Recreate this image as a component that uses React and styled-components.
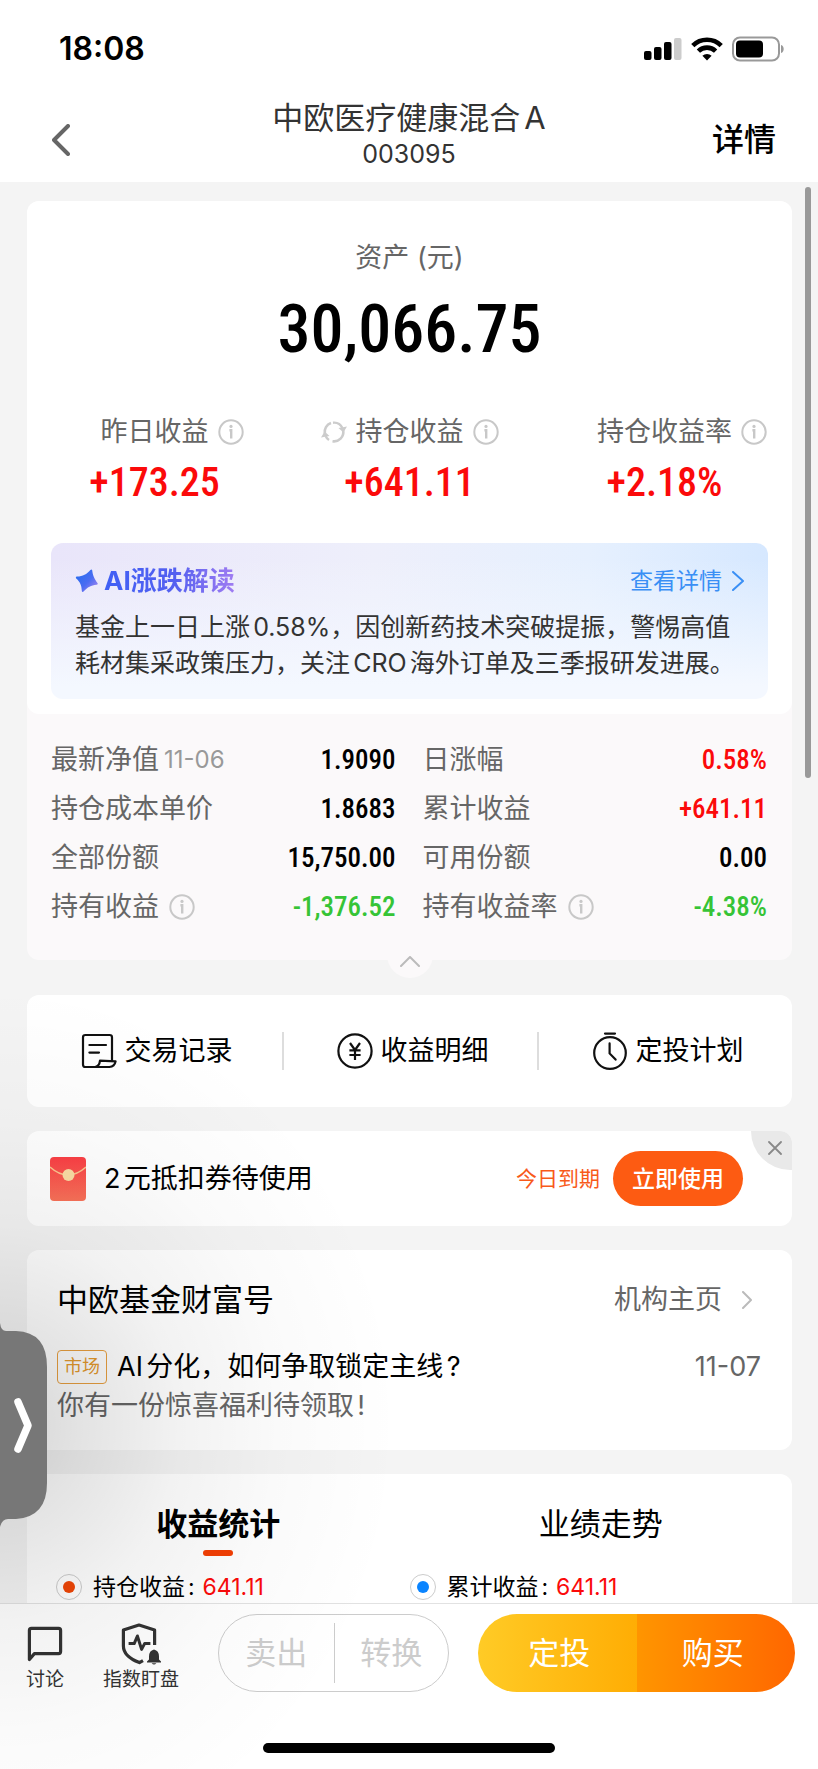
import React from 'react';
import styled, { createGlobalStyle, css } from 'styled-components';

const GlobalStyle = createGlobalStyle`
  *, *::before, *::after { box-sizing: border-box; }
  body { margin: 0; background: #f4f4f4; }
  button {
    margin: 0; padding: 0; border: 0; background: none;
    font: inherit; color: inherit; cursor: pointer;
  }
  a { color: inherit; text-decoration: none; }
  h1, h2, h3, p, dl, dd { margin: 0; font-weight: 400; }
  svg { display: block; flex: none; }
`;

const numeric = css`
  font-family: "Roboto Condensed", Roboto, "Liberation Sans", sans-serif;
  font-weight: 500;
`;

const tones = { up: '#fb0a0a', down: '#36c436', plain: '#000' };

/* ---------- shell ---------- */

const Page = styled.div`
  position: relative;
  display: flex;
  flex-direction: column;
  height: 100vh;
  overflow: hidden;
  background: #f4f4f4;
  color: #000;
  font-family: Inter, "Noto Sans CJK SC", sans-serif;
  font-size: 27px;
  line-height: 36px;
  text-autospace: normal;
`;

const StatusBar = styled.div`
  display: flex;
  align-items: center;
  gap: 9px;
  height: 98px;
  padding: 0 34px 0 59px;
  background: #fff;
`;

const Clock = styled.time`
  flex: 1;
  font-size: 32px;
  font-weight: 600;
`;

const NavBar = styled.header`
  display: grid;
  grid-template-columns: 1fr auto 1fr;
  align-items: center;
  height: 84px;
  padding: 0 42px;
  background: #fff;
`;

const BackButton = styled.button`
  justify-self: start;
  padding: 10px;
`;

const NavTitle = styled.div`
  padding-bottom: 8px;
  text-align: center;
  color: #333;
`;

const FundName = styled.h1`
  font-size: 31px;
`;

const FundCode = styled.p`
  font-size: 25px;
`;

const NavLink = styled.a`
  justify-self: end;
  font-size: 32px;
  font-weight: 500;
`;

const Scroller = styled.main`
  flex: 1;
  min-height: 0;
  overflow-y: auto;
  scrollbar-width: none;
  padding: 19px 26px 0 27px;
`;

const ScrollThumb = styled.div`
  position: absolute;
  top: 187px;
  right: 7px;
  width: 6px;
  height: 591px;
  border-radius: 3px;
  background: #999;
`;

const Card = styled.section`
  position: relative;
  margin-bottom: 24px;
  border-radius: 12px;
  background: #fff;
`;

/* ---------- assets ---------- */

const AssetCard = styled(Card)`
  margin-bottom: 35px;
  background: #fbf9fa;
`;

const Summary = styled.div`
  padding: 39px 0 15px;
  border-radius: 12px;
  background: #fff;
  text-align: center;
`;

const AssetLabel = styled.h2`
  font-size: 27px;
  color: #666;
`;

const AssetValue = styled.p`
  ${numeric}
  margin-top: 21px;
  font-size: 66px;
  line-height: 66px;
`;

const Stats = styled.dl`
  display: grid;
  grid-template-columns: repeat(3, 1fr);
  margin-top: 51px;
`;

const StatLabel = styled.dt`
  display: grid;
  grid-template-columns: 1fr auto 1fr;
  align-items: center;
  column-gap: 9px;
  color: #666;
`;

const IconSlot = styled.span`
  justify-self: ${(p) => (p.$end ? 'end' : 'start')};
`;

const StatValue = styled.dd`
  ${numeric}
  margin-top: 9px;
  font-size: 40px;
  line-height: 48px;
  color: ${(p) => tones[p.$tone]};
`;

const Insight = styled.div`
  margin: 36px 24px 0;
  padding: 20px 24px 18px;
  border-radius: 12px;
  text-align: left;
  background:
    linear-gradient(to bottom, rgba(246, 249, 255, 0) 10%, #f4f8ff 92%),
    linear-gradient(to right, #e9e5fa 0%, #eeeffb 45%, #e6f0fe 75%, #d6e8ff 100%);
`;

const InsightHead = styled.div`
  display: flex;
  align-items: center;
  justify-content: space-between;
`;

const InsightTitle = styled.h3`
  display: flex;
  align-items: center;
  gap: 5px;
  font-size: 26px;
  font-weight: 700;
  text-autospace: no-autospace;
`;

const GradientText = styled.span`
  background: linear-gradient(to right, #3f5ff5 0%, #5560f0 55%, #a07cf2 100%);
  background-clip: text;
  color: transparent;
`;

const InsightLink = styled.a`
  display: flex;
  align-items: center;
  gap: 10px;
  font-size: 23px;
  color: #3a8ff5;
`;

const InsightBody = styled.p`
  margin-top: 10px;
  font-size: 25px;
  color: #333;
`;

const Details = styled.dl`
  display: grid;
  grid-template-columns: 1fr 1fr;
  column-gap: 27px;
  padding: 21px 25px 29px 24px;
`;

const DetailRow = styled.div`
  display: flex;
  align-items: center;
  justify-content: space-between;
  height: 49px;
`;

const DetailLabel = styled.dt`
  display: flex;
  align-items: center;
  gap: 10px;
  color: #666;
`;

const DetailDate = styled.small`
  margin-left: -5px;
  font-size: 24px;
  color: #999;
`;

const DetailValue = styled.dd`
  ${numeric}
  font-size: 27px;
  color: ${(p) => tones[p.$tone]};
`;

const CollapseButton = styled.button`
  position: absolute;
  left: 50%;
  bottom: -18px;
  display: grid;
  place-items: center;
  width: 46px;
  height: 46px;
  margin-left: -23px;
  padding-top: 12px;
  border-radius: 50%;
  background: #fbf9fa;
`;

/* ---------- shortcuts ---------- */

const Shortcuts = styled(Card)`
  display: grid;
  grid-template-columns: repeat(3, 1fr);
  padding: 37px 0;
`;

const Shortcut = styled.button`
  display: flex;
  align-items: center;
  justify-content: center;
  gap: 8px;
  height: 38px;
  padding-left: 4px;
  & + & { border-left: 2px solid #ddd; }
`;

/* ---------- coupon ---------- */

const Coupon = styled(Card)`
  display: flex;
  align-items: center;
  height: 95px;
  padding: 0 49px 0 23px;
  overflow: hidden;
`;

const CouponText = styled.p`
  flex: 1;
  margin-left: 18px;
`;

const Expiry = styled.span`
  margin-right: 13px;
  font-size: 21px;
  color: #f85a1a;
`;

const UseButton = styled.button`
  width: 130px;
  height: 55px;
  border-radius: 28px;
  background: #fd5b12;
  color: #fff;
  font-size: 23px;
  font-weight: 500;
`;

const CloseButton = styled.button`
  position: absolute;
  top: 0;
  right: 0;
  display: grid;
  place-items: center;
  width: 41px;
  height: 39px;
  padding: 0 0 6px 6px;
  border-bottom-left-radius: 39px;
  background: #e9e9e9;
`;

/* ---------- institution ---------- */

const Institution = styled(Card)`
  padding: 32px 31px 26px 30px;
`;

const Row = styled.div`
  display: flex;
  align-items: center;
  justify-content: space-between;
`;

const SectionTitle = styled.h2`
  font-size: 31px;
`;

const HomeLink = styled.a`
  display: flex;
  align-items: center;
  gap: 20px;
  padding-right: 9px;
  color: #666;
`;

const ArticleRow = styled(Row)`
  margin-top: 31px;
`;

const ArticleLink = styled.a`
  display: flex;
  align-items: center;
  gap: 10px;
`;

const Tag = styled.span`
  width: 50px;
  height: 34px;
  border: 1px solid #e9a040;
  border-radius: 4px;
  font-size: 18px;
  line-height: 32px;
  text-align: center;
  color: #e59a2e;
`;

const ArticleDate = styled.time`
  font-size: 27px;
  color: #666;
`;

const ArticleNote = styled.p`
  margin-top: 3px;
  color: #666;
`;

/* ---------- statistics ---------- */

const Statistics = styled(Card)`
  margin-bottom: 0;
  padding-top: 30px;
  border-radius: 12px 12px 0 0;
`;

const Tabs = styled.div`
  display: grid;
  grid-template-columns: 1fr 1fr;
`;

const Tab = styled.button`
  display: flex;
  flex-direction: column;
  align-items: center;
  gap: 6px;
  font-size: 31px;
  line-height: 40px;
  font-weight: ${(p) => (p.$active ? 700 : 400)};
  &::after {
    content: "";
    width: 30px;
    height: 6px;
    border-radius: 3px;
    background: ${(p) => (p.$active ? '#f33f04' : 'transparent')};
  }
`;

const Legend = styled.div`
  display: grid;
  grid-template-columns: 1fr 1fr;
  padding: 16px 29px 1px;
`;

const LegendItem = styled.div`
  display: flex;
  align-items: center;
  gap: 11px;
  font-size: 23px;
  line-height: 30px;
`;

const Marker = styled.i`
  display: grid;
  place-items: center;
  width: 26px;
  height: 26px;
  border: 1px solid #ccc;
  border-radius: 50%;
  &::after {
    content: "";
    width: 12px;
    height: 12px;
    border-radius: 50%;
    background: ${(p) => p.$color};
  }
`;

const LegendValue = styled.span`
  margin-left: -3px;
  color: #fb0a0a;
`;

/* ---------- footer ---------- */

const Footer = styled.footer`
  padding: 10px 0 16px;
  border-top: 1px solid #e2e2e2;
  background: #fff;
`;

const FooterBar = styled.div`
  display: flex;
  padding: 0 23px 0 26px;
`;

const FooterIcon = styled.button`
  display: flex;
  flex-direction: column;
  align-items: center;
  gap: 3px;
  margin-right: 39px;
  padding-top: 9px;
  font-size: 19px;
  line-height: 24px;
  color: #333;
  white-space: nowrap;
`;

const IconBox = styled.span`
  display: grid;
  place-items: center;
  height: 42px;
`;

const Pill = styled.div`
  display: grid;
  grid-template-columns: 1fr 1fr;
  flex: ${(p) => p.$grow} 1 0;
  height: 78px;
  border-radius: 39px;
  overflow: hidden;
  font-size: 31px;
`;

const OutlinePill = styled(Pill)`
  align-items: center;
  margin-right: 29px;
  border: 1px solid #ccc;
  color: #ccc;
`;

const OutlineAction = styled.button`
  height: 60px;
  & + & { border-left: 1px solid #ccc; }
`;

const SolidAction = styled.button`
  padding-left: 4px;
  background: linear-gradient(to right, ${(p) => p.$from}, ${(p) => p.$to});
  color: #fff;
  & + & { padding: 0 6px 0 0; }
`;

const HomeIndicator = styled.div`
  width: 292px;
  height: 10px;
  margin: 51px auto 0;
  border-radius: 5px;
  background: #000;
`;

/* ---------- floating drawer ---------- */

const DrawerShade = styled.div`
  position: absolute;
  left: 0;
  bottom: -96px;
  width: 400px;
  height: 880px;
  pointer-events: none;
  background: radial-gradient(
    ellipse 100% 50% at 0 50%,
    rgba(0, 0, 0, 0.17) 0%,
    rgba(0, 0, 0, 0.11) 20%,
    rgba(0, 0, 0, 0.05) 45%,
    rgba(0, 0, 0, 0.02) 70%,
    rgba(0, 0, 0, 0) 100%
  );
`;

const DrawerHandle = styled.button`
  position: absolute;
  left: 0;
  bottom: 242px;
`;

/* ---------- icons ---------- */

const InfoIcon = () => (
  <svg width="26" height="26" viewBox="0 0 26 26" fill="none">
    <circle cx="13" cy="13" r="11.7" stroke="#c8c8c8" strokeWidth="2" />
    <path d="M11.4 11.2H13.2V19.4" stroke="#c8c8c8" strokeWidth="2.4" />
    <circle cx="13" cy="7.4" r="1.6" fill="#c8c8c8" />
  </svg>
);

const RefreshIcon = () => (
  <svg width="26" height="24" viewBox="0 0 26 24" fill="none">
    <path d="M3.8 13.5A9.3 9.3 0 0 1 10 3.1M22.2 10.5A9.3 9.3 0 0 1 11.5 21.2" stroke="#ccc" strokeWidth="2.6" />
    <path d="M17.5 8L26 6.5L22.4 12.6zM8.5 16L0 17.5L3.6 11.4z" fill="#ccc" />
    <path d="M12 2.7A9.3 9.3 0 0 1 21.4 8M8 20A9.3 9.3 0 0 1 4.6 16" stroke="#ccc" strokeWidth="2.4" />
  </svg>
);

const Chevron = ({ width, height, color, stroke, dir = 'right' }) => {
  const i = stroke / 2;
  const d = {
    right: `M${i} ${i}L${width - i} ${height / 2}L${i} ${height - i}`,
    left: `M${width - i} ${i}L${i} ${height / 2}L${width - i} ${height - i}`,
    up: `M${i} ${height - i}L${width / 2} ${i}L${width - i} ${height - i}`,
  }[dir];
  return (
    <svg width={width} height={height} fill="none">
      <path d={d} stroke={color} strokeWidth={stroke} strokeLinecap="round" strokeLinejoin="round" />
    </svg>
  );
};

const SignalIcon = () => (
  <svg width="38" height="24" viewBox="0 0 38 24">
    <rect x="0" y="14" width="7.5" height="9" rx="2" />
    <rect x="10" y="10" width="7.5" height="13" rx="2" />
    <rect x="20" y="5" width="7.5" height="18" rx="2" />
    <rect x="30" y="1" width="7.5" height="22" rx="2" fill="#ccc" />
  </svg>
);

const WifiIcon = () => (
  <svg width="32" height="24" viewBox="0 0 32 24" fill="none">
    <path d="M1.8 8.6A20.2 20.2 0 0 1 30.2 8.6" stroke="#000" strokeWidth="4.6" />
    <path d="M7.4 14.2A12.2 12.2 0 0 1 24.6 14.2" stroke="#000" strokeWidth="4.6" />
    <path d="M16 23.4L11.4 18.8A6.5 6.5 0 0 1 20.6 18.8z" fill="#000" />
  </svg>
);

const BatteryIcon = () => (
  <svg width="52" height="26" viewBox="0 0 52 26" fill="none">
    <rect x="1" y="1.5" width="46" height="23" rx="7" stroke="#999" strokeWidth="2" />
    <rect x="4" y="4.5" width="27" height="17" rx="4" fill="#000" />
    <path d="M49 9C52.6 10 52.6 16 49 17z" fill="#999" />
  </svg>
);

const StarIcon = () => (
  <svg width="24" height="24" viewBox="0 0 24 24">
    <defs>
      <linearGradient id="star" x1="0" y1="0" x2="1" y2="1">
        <stop offset="0.2" stopColor="#2f6df0" />
        <stop offset="0.55" stopColor="#4a6cf2" />
        <stop offset="1" stopColor="#b58af0" />
      </linearGradient>
    </defs>
    <path
      d="M17.2 1.2C17.8 6.2 19 9.2 22.6 14.2Q23.2 15.6 21.4 15.8C16 16.4 12.6 18.2 8.6 22.6Q7 23.8 6.8 21.8C6.6 16.2 5.2 13 1.2 9.4Q0.2 7.8 2 7.6C8 7.2 11.6 5.4 15.4 1Q16.8 -.2 17.2 1.2z"
      fill="url(#star)"
    />
  </svg>
);

const RecordIcon = () => (
  <svg width="36" height="36" viewBox="0 0 36 36" fill="none" stroke="#111" strokeWidth="2.2" strokeLinejoin="round" strokeLinecap="round">
    <path d="M31 27V4.4Q31 2 28.6 2H4.4Q2 2 2 4.4V31.4Q2 34 4.4 34H28.4Q33.6 33.6 34.6 28.4L19 27.6Q18.4 33 14.2 34" />
    <path d="M8.4 12H25M8.4 19.6H18" />
  </svg>
);

const YenIcon = () => (
  <svg width="36" height="36" viewBox="0 0 36 36" fill="none" stroke="#111" strokeWidth="2.2">
    <circle cx="18" cy="18" r="16.6" />
    <path d="M13 10L18 17L23 10M18 17V27M12.4 17.4H23.6M12.4 22H23.6" />
  </svg>
);

const TimerIcon = () => (
  <svg width="36" height="38" viewBox="0 0 36 38" fill="none" stroke="#111" strokeWidth="2.2" strokeLinecap="round">
    <circle cx="18" cy="21" r="15.8" />
    <path d="M13 1.6H23M17.6 11.4V21.4L23.6 27.6" />
  </svg>
);

const EnvelopeIcon = () => (
  <svg width="36" height="44" viewBox="0 0 36 44" fill="none">
    <defs>
      <linearGradient id="env" x1="0" y1="0" x2="0" y2="1">
        <stop offset="0" stopColor="#fb3f45" />
        <stop offset="1" stopColor="#fa7259" />
      </linearGradient>
    </defs>
    <rect width="36" height="44" rx="4" fill="url(#env)" />
    <path d="M0 10Q9 18 18 18T36 10" stroke="#fcc48e" strokeWidth="1.4" />
    <circle cx="18.5" cy="18" r="6" fill="#fbdca4" />
  </svg>
);

const CloseIcon = () => (
  <svg width="14" height="14" viewBox="0 0 14 14">
    <path d="M1 1L13 13M13 1L1 13" stroke="#888" strokeWidth="1.8" strokeLinecap="round" />
  </svg>
);

const ChatIcon = () => (
  <svg width="36" height="36" viewBox="0 0 36 36" fill="none">
    <path d="M2.4 33.5V4.4Q2.4 2.4 4.4 2.4H31.6Q33.6 2.4 33.6 4.4V25.6Q33.6 27.6 31.6 27.6H7.4z" stroke="#333" strokeWidth="3.2" strokeLinejoin="round" />
  </svg>
);

const WatchIcon = () => (
  <svg width="40" height="42" viewBox="0 0 40 42" fill="none">
    <path d="M33.6 22V7L18 2L2.4 7V23C2.4 31 9 36 18.4 39.6L22 37.6" stroke="#333" strokeWidth="3.2" strokeLinejoin="round" />
    <path d="M7.6 20.6H13.2L16.4 13L20.6 26.4L23.6 20.6H29.4" stroke="#333" strokeWidth="3" strokeLinejoin="round" />
    <path d="M33 26.4Q38 27.6 38 33.4V36.6L40 38.6V39.4H26V38.6L28 36.6V33.4Q28 27.6 33 26.4z" fill="#333" />
    <path d="M30.6 40.2H35.4Q33 42.6 30.6 40.2z" fill="#333" />
  </svg>
);

const HandleShape = () => (
  <svg width="48" height="204" viewBox="0 0 48 204" fill="none">
    <path d="M0 0Q1 8 6 8H16Q47 9 47 44V160Q47 194 16 196H8Q2 196 0 204z" fill="#777" />
    <path d="M18 79L28 102.5L18 126" stroke="#fff" strokeWidth="7.5" strokeLinecap="round" strokeLinejoin="round" />
  </svg>
);

/* ---------- data ---------- */

const stats = [
  { label: '昨日收益', value: '+173.25' },
  { label: '持仓收益', value: '+641.11', refresh: true },
  { label: '持仓收益率', value: '+2.18%' },
];

const details = [
  { label: '最新净值', date: '11-06', value: '1.9090', tone: 'plain' },
  { label: '日涨幅', value: '0.58%', tone: 'up' },
  { label: '持仓成本单价', value: '1.8683', tone: 'plain' },
  { label: '累计收益', value: '+641.11', tone: 'up' },
  { label: '全部份额', value: '15,750.00', tone: 'plain' },
  { label: '可用份额', value: '0.00', tone: 'plain' },
  { label: '持有收益', info: true, value: '-1,376.52', tone: 'down' },
  { label: '持有收益率', info: true, value: '-4.38%', tone: 'down' },
];

const shortcuts = [
  { label: '交易记录', Icon: RecordIcon },
  { label: '收益明细', Icon: YenIcon },
  { label: '定投计划', Icon: TimerIcon },
];

const legend = [
  { label: '持仓收益:', value: '641.11', color: '#f04606' },
  { label: '累计收益:', value: '641.11', color: '#0a84ff' },
];

export default function App() {
  return (
    <Page lang="zh-CN">
      <GlobalStyle />
      <StatusBar>
        <Clock>18:08</Clock>
        <SignalIcon />
        <WifiIcon />
        <BatteryIcon />
      </StatusBar>
      <NavBar>
        <BackButton aria-label="返回">
          <Chevron width={18} height={32} color="#666" stroke={4} dir="left" />
        </BackButton>
        <NavTitle>
          <FundName>中欧医疗健康混合A</FundName>
          <FundCode>003095</FundCode>
        </NavTitle>
        <NavLink href="#detail">详情</NavLink>
      </NavBar>

      <Scroller>
        <AssetCard>
          <Summary>
            <AssetLabel>资产 (元)</AssetLabel>
            <AssetValue>30,066.75</AssetValue>
            <Stats>
              {stats.map((s) => (
                <div key={s.label}>
                  <StatLabel>
                    <IconSlot $end>{s.refresh && <RefreshIcon />}</IconSlot>
                    {s.label}
                    <IconSlot><InfoIcon /></IconSlot>
                  </StatLabel>
                  <StatValue $tone="up">{s.value}</StatValue>
                </div>
              ))}
            </Stats>
            <Insight>
              <InsightHead>
                <InsightTitle>
                  <StarIcon />
                  <GradientText>AI涨跌解读</GradientText>
                </InsightTitle>
                <InsightLink href="#insight">
                  查看详情
                  <Chevron width={12} height={20} color="#3a8ff5" stroke={2} />
                </InsightLink>
              </InsightHead>
              <InsightBody>
                基金上一日上涨0.58%，因创新药技术突破提振，警惕高值耗材集采政策压力，关注CRO海外订单及三季报研发进展。
              </InsightBody>
            </Insight>
          </Summary>
          <Details>
            {details.map((d) => (
              <DetailRow key={d.label}>
                <DetailLabel>
                  {d.label}
                  {d.date && <DetailDate>{d.date}</DetailDate>}
                  {d.info && <InfoIcon />}
                </DetailLabel>
                <DetailValue $tone={d.tone}>{d.value}</DetailValue>
              </DetailRow>
            ))}
          </Details>
          <CollapseButton aria-label="收起">
            <Chevron width={20} height={11} color="#bbb" stroke={2} dir="up" />
          </CollapseButton>
        </AssetCard>

        <Shortcuts>
          {shortcuts.map(({ label, Icon }) => (
            <Shortcut key={label}>
              <Icon />
              {label}
            </Shortcut>
          ))}
        </Shortcuts>

        <Coupon>
          <EnvelopeIcon />
          <CouponText>2元抵扣券待使用</CouponText>
          <Expiry>今日到期</Expiry>
          <UseButton>立即使用</UseButton>
          <CloseButton aria-label="关闭"><CloseIcon /></CloseButton>
        </Coupon>

        <Institution>
          <Row>
            <SectionTitle>中欧基金财富号</SectionTitle>
            <HomeLink href="#institution">
              机构主页
              <Chevron width={10} height={18} color="#bbb" stroke={2} />
            </HomeLink>
          </Row>
          <ArticleRow>
            <ArticleLink href="#article">
              <Tag>市场</Tag>
              AI分化，如何争取锁定主线?
            </ArticleLink>
            <ArticleDate>11-07</ArticleDate>
          </ArticleRow>
          <ArticleNote>你有一份惊喜福利待领取!</ArticleNote>
        </Institution>

        <Statistics>
          <Tabs role="tablist">
            <Tab role="tab" aria-selected="true" $active>收益统计</Tab>
            <Tab role="tab" aria-selected="false">业绩走势</Tab>
          </Tabs>
          <Legend>
            {legend.map((l) => (
              <LegendItem key={l.label}>
                <Marker $color={l.color} />
                {l.label}
                <LegendValue>{l.value}</LegendValue>
              </LegendItem>
            ))}
          </Legend>
        </Statistics>
      </Scroller>

      <ScrollThumb />

      <Footer>
        <FooterBar>
          <FooterIcon>
            <IconBox><ChatIcon /></IconBox>
            讨论
          </FooterIcon>
          <FooterIcon>
            <IconBox><WatchIcon /></IconBox>
            指数盯盘
          </FooterIcon>
          <OutlinePill $grow={229}>
            <OutlineAction>卖出</OutlineAction>
            <OutlineAction>转换</OutlineAction>
          </OutlinePill>
          <Pill $grow={317}>
            <SolidAction $from="#ffcb26" $to="#ffad04">定投</SolidAction>
            <SolidAction $from="#ff9500" $to="#ff6700">购买</SolidAction>
          </Pill>
        </FooterBar>
        <HomeIndicator />
      </Footer>

      <DrawerShade />
      <DrawerHandle aria-label="展开"><HandleShape /></DrawerHandle>
    </Page>
  );
}
